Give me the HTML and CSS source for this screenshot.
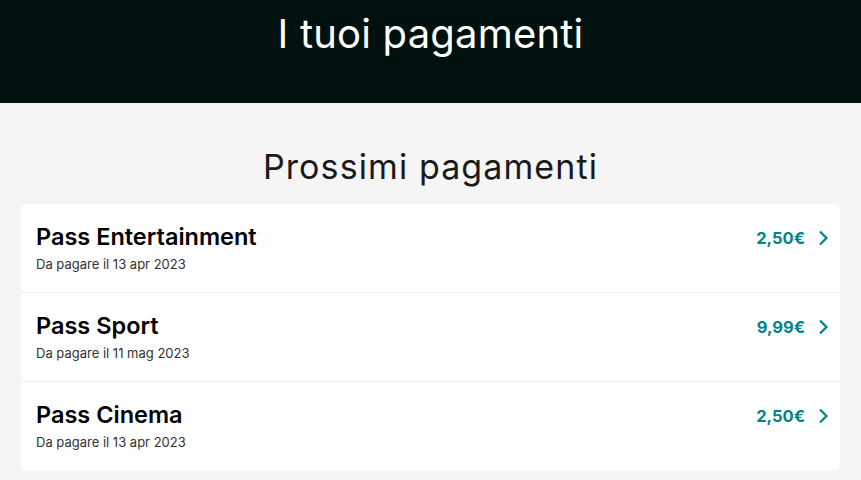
FILE: index.html
```html
<!DOCTYPE html>
<html>
<head>
    <title>I tuoi pagamenti</title>
    <link rel="stylesheet" href="styles.css">
</head>
<body>
    <header class="top-bar">
        <h1>I tuoi pagamenti</h1>
    </header>
    <main class="content">
        <h2 class="section-title">Prossimi pagamenti</h2>
        <div class="payments-card">
            <a class="payment-row" href="#">
                <div class="payment-info">
                    <div class="payment-name">Pass Entertainment</div>
                    <div class="payment-date">Da pagare il 13 apr 2023</div>
                </div>
                <div class="payment-amount">
                    <span>2,50€</span>
                    <svg class="chevron" viewBox="0 0 12 16" width="12" height="16"><path d="M3 1.5l6.5 6.5-6.5 6.5" fill="none" stroke="currentColor" stroke-width="2.2"/></svg>
                </div>
            </a>
            <a class="payment-row" href="#">
                <div class="payment-info">
                    <div class="payment-name">Pass Sport</div>
                    <div class="payment-date">Da pagare il 11 mag 2023</div>
                </div>
                <div class="payment-amount">
                    <span>9,99€</span>
                    <svg class="chevron" viewBox="0 0 12 16" width="12" height="16"><path d="M3 1.5l6.5 6.5-6.5 6.5" fill="none" stroke="currentColor" stroke-width="2.2"/></svg>
                </div>
            </a>
            <a class="payment-row" href="#">
                <div class="payment-info">
                    <div class="payment-name">Pass Cinema</div>
                    <div class="payment-date">Da pagare il 13 apr 2023</div>
                </div>
                <div class="payment-amount">
                    <span>2,50€</span>
                    <svg class="chevron" viewBox="0 0 12 16" width="12" height="16"><path d="M3 1.5l6.5 6.5-6.5 6.5" fill="none" stroke="currentColor" stroke-width="2.2"/></svg>
                </div>
            </a>
        </div>
    </main>
</body>
</html>
```

FILE: styles.css
```css
body {
    font-family: Inter, "Noto Sans", sans-serif;
    background-color: #f5f5f5;
    margin: 0;
    padding: 0;
}
.top-bar {
    background-color: #001110;
    height: 103px;
    box-sizing: border-box;
    padding-top: 10px;
}
.top-bar h1 {
    margin: 0;
    color: white;
    font-weight: 400;
    font-size: 40px;
    line-height: 48px;
    text-align: center;
    letter-spacing: 0.2px;
}
.content {
    padding: 42px 21px 0;
}
.section-title {
    margin: 0 0 15px;
    color: #1a1a1a;
    font-weight: 400;
    font-size: 34px;
    line-height: 44px;
    text-align: center;
    letter-spacing: 1.1px;
}
.payments-card {
    background: white;
    border-radius: 6px;
}
.payment-row {
    display: flex;
    align-items: flex-start;
    justify-content: space-between;
    height: 89px;
    box-sizing: border-box;
    padding: 19px 11px 0 15px;
    border-bottom: 1px solid #efefef;
    color: inherit;
    text-decoration: none;
}
.payment-row:last-child {
    border-bottom: none;
}
.payment-name {
    font-size: 23.5px;
    font-weight: 600;
    color: #000;
    line-height: 28px;
}
.payment-date {
    font-size: 13px;
    color: #333;
    margin-top: 5px;
}
.payment-amount {
    display: flex;
    align-items: center;
    gap: 12px;
    margin-top: 1px;
    color: #00838a;
    font-weight: 700;
    font-size: 16.5px;
    line-height: 28px;
}
```
